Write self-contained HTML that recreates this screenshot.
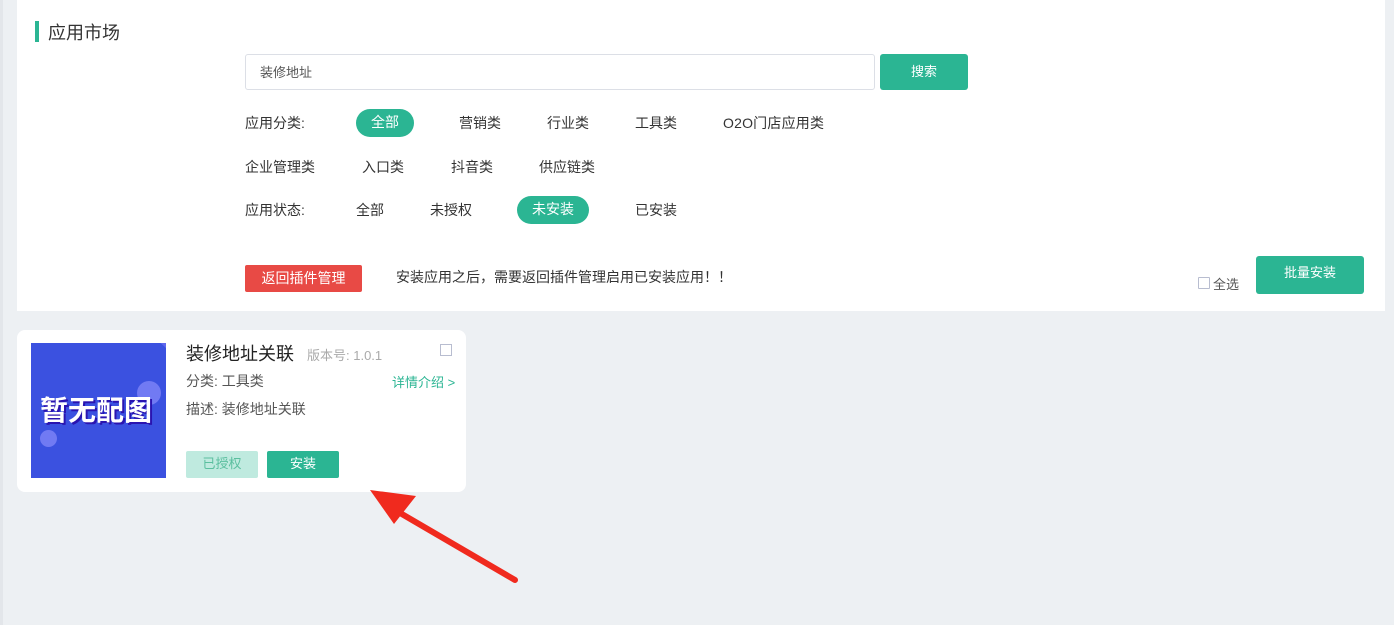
<!DOCTYPE html>
<html><head><meta charset="utf-8"><style>
*{margin:0;padding:0;box-sizing:border-box}
body{width:1394px;height:625px;background:#edf0f3;font-family:"Liberation Sans","Noto Sans CJK SC",sans-serif;position:relative;overflow:hidden;color:#333}
.a{position:absolute}
.panel{left:17px;top:0;width:1368px;height:311px;background:#fff}
.t{font-size:14px;white-space:nowrap}
.pill{background:#2bb593;color:#fff;border-radius:14px;text-align:center}
</style></head><body>
<div class="a" style="left:0;top:0;width:3px;height:625px;background:#e3e6ea"></div>
<div class="a panel"></div>
<div class="a" style="left:35px;top:21px;width:4px;height:21px;background:#2bb593"></div>
<div class="a" style="left:48px;top:19px;font-size:18px;color:#333">应用市场</div>
<div class="a" style="left:245px;top:54px;width:630px;height:36px;border:1px solid #dcdfe6;border-radius:3px;font-size:13px;color:#555;padding:7px 14px">装修地址</div>
<div class="a" style="left:880px;top:54px;width:88px;height:36px;background:#2bb593;border-radius:3px;color:#fff;font-size:13px;text-align:center;line-height:36px">搜索</div>
<div class="a t" style="left:245px;top:113px">应用分类:</div>
<div class="a t pill" style="left:356px;top:109px;width:58px;height:28px;line-height:27px">全部</div>
<div class="a t" style="left:459px;top:113px">营销类</div>
<div class="a t" style="left:547px;top:113px">行业类</div>
<div class="a t" style="left:635px;top:113px">工具类</div>
<div class="a t" style="left:723px;top:113px;letter-spacing:.2px">O2O门店应用类</div>
<div class="a t" style="left:245px;top:157px">企业管理类</div>
<div class="a t" style="left:362px;top:157px">入口类</div>
<div class="a t" style="left:451px;top:157px">抖音类</div>
<div class="a t" style="left:539px;top:157px">供应链类</div>
<div class="a t" style="left:245px;top:200px">应用状态:</div>
<div class="a t" style="left:356px;top:200px">全部</div>
<div class="a t" style="left:430px;top:200px">未授权</div>
<div class="a t pill" style="left:517px;top:196px;width:72px;height:28px;line-height:27px">未安装</div>
<div class="a t" style="left:635px;top:200px">已安装</div>
<div class="a t" style="left:245px;top:265px;width:117px;height:27px;background:#e84a45;color:#fff;border-radius:2px;text-align:center;line-height:26px">返回插件管理</div>
<div class="a t" style="left:396px;top:267px">安装应用之后，需要返回插件管理启用已安装应用！！</div>
<div class="a" style="left:1198px;top:277px;width:12px;height:12px;border:1px solid #b8bdd0;border-radius:1px"></div>
<div class="a" style="left:1213px;top:274px;font-size:13px;color:#555">全选</div>
<div class="a" style="left:1256px;top:256px;width:108px;height:38px;background:#2bb593;border-radius:3px;color:#fff;font-size:13px;text-align:center;line-height:34px">批量安装</div>

<div class="a" style="left:17px;top:330px;width:449px;height:162px;background:#fff;border-radius:8px"></div>
<div class="a" style="left:31px;top:343px;width:135px;height:135px;background:#3b51e0;overflow:hidden">
 <div class="a" style="left:-60px;top:-40px;width:240px;height:240px;border-radius:50%;border:14px solid rgba(140,130,255,.45)"></div>
 <div class="a" style="left:106px;top:38px;width:24px;height:24px;border-radius:50%;background:rgba(150,150,255,.6)"></div>
 <div class="a" style="left:9px;top:87px;width:17px;height:17px;border-radius:50%;background:rgba(150,150,255,.6)"></div>
 <div class="a" style="left:9px;top:46px;font-size:28px;font-weight:bold;color:#fff;text-shadow:2px 2px 0 #2a14b0;white-space:nowrap">暂无配图</div>
</div>
<div class="a" style="left:186px;top:340px;font-size:18px;color:#222">装修地址关联</div>
<div class="a" style="left:307px;top:345px;font-size:13px;color:#aaa">版本号: 1.0.1</div>
<div class="a" style="left:440px;top:344px;width:12px;height:12px;border:1px solid #b8bdd0"></div>
<div class="a t" style="left:186px;top:371px;color:#555">分类: 工具类</div>
<div class="a" style="left:392px;top:372px;color:#2bb593;font-size:13px">详情介绍 &gt;</div>
<div class="a t" style="left:186px;top:399px;color:#555">描述: 装修地址关联</div>
<div class="a" style="left:186px;top:451px;width:72px;height:27px;background:#bfeadf;color:#5bbf9f;border-radius:2px;font-size:13px;text-align:center;line-height:26px">已授权</div>
<div class="a" style="left:267px;top:451px;width:72px;height:27px;background:#2bb593;color:#fff;border-radius:2px;font-size:13px;text-align:center;line-height:26px">安装</div>
<svg class="a" style="left:360px;top:480px" width="170" height="110">
 <line x1="155" y1="100" x2="35" y2="30" stroke="#f02a1e" stroke-width="6" stroke-linecap="round"/>
 <polygon points="10,10 56,16 34,44" fill="#f02a1e"/>
</svg>
</body></html>
